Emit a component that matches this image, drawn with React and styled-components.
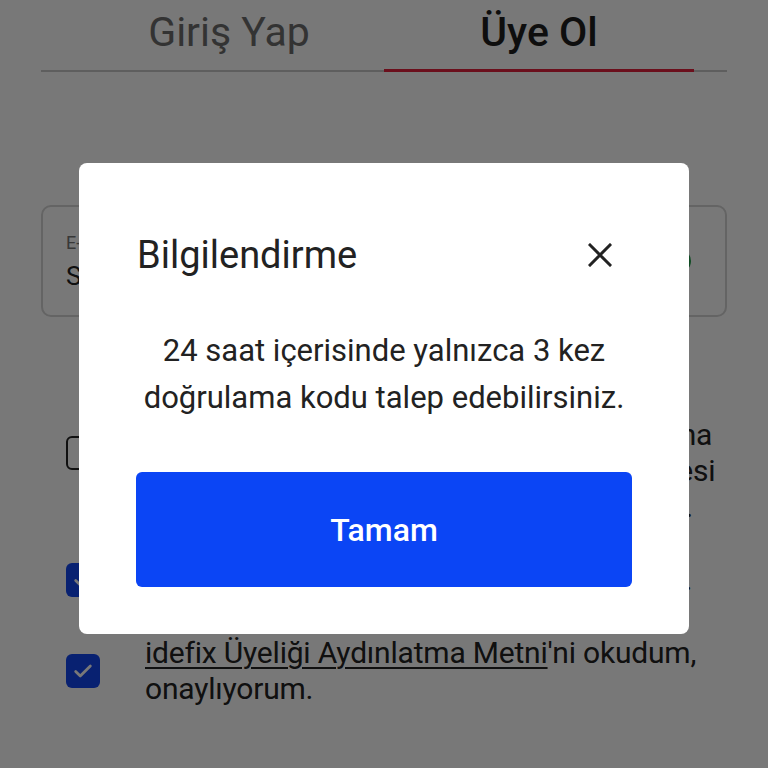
import React from 'react';
import styled, { createGlobalStyle } from 'styled-components';

const GlobalStyle = createGlobalStyle`
  html, body {
    margin: 0;
    padding: 0;
    background: #ffffff;
  }
  body {
    font-family: Roboto, 'Liberation Sans', sans-serif;
    color: #222222;
  }
`;

const agreements = [
  {
    id: 'consent',
    checked: false,
    lines: [
      'Kampanya ve fırsatlardan haberdar',
      'olmak üzere Açık Rıza Metni uyarınca, bana',
      'ileti gönderilmesine ve verilerimin işlenmesi',
      'yönünde açık rıza verdiğimi beyan ederim.',
    ],
  },
  {
    id: 'contract',
    checked: true,
    lines: ['Üyelik Sözleşmesi\u2019ni okudum, kabul ettim.'],
  },
];

const CheckIcon = () => (
  <svg width="22" height="22" viewBox="0 0 24 24" fill="none">
    <path d="M4 12.5l5 5L20 6.5" stroke="#ffffff" strokeWidth="3" strokeLinecap="round" strokeLinejoin="round" />
  </svg>
);

const CloseIcon = () => (
  <svg width="24" height="24" viewBox="0 0 24 24" fill="none">
    <path d="M2 2l20 20M22 2L2 22" stroke="#222222" strokeWidth="3" strokeLinecap="square" />
  </svg>
);

const Checkbox = ({ checked }) => (
  <Box checked={checked}>{checked && <CheckIcon />}</Box>
);

const App = () => (
  <>
    <GlobalStyle />
    <Page>
      <TabBar>
        <Tab>Giriş Yap</Tab>
        <Tab active>Üye Ol</Tab>
      </TabBar>

      <Field>
        <FieldText>
          <FieldLabel>E-posta</FieldLabel>
          <FieldValue>Sedayilmaz@gmail.com</FieldValue>
        </FieldText>
        <ValidBadge>
          <svg width="14" height="14" viewBox="0 0 24 24" fill="none">
            <path d="M4 12.5l5 5L20 6.5" stroke="#ffffff" strokeWidth="3.5" strokeLinecap="round" strokeLinejoin="round" />
          </svg>
        </ValidBadge>
      </Field>

      <Agreements>
        {agreements.map((item) => (
          <AgreementRow key={item.id}>
            <Checkbox checked={item.checked} />
            <AgreementText>
              {item.lines.map((line, i) => (
                <Line key={i}>{line}</Line>
              ))}
            </AgreementText>
          </AgreementRow>
        ))}
        <AgreementRow>
          <Checkbox checked />
          <AgreementText>
            <DocLink>idefix Üyeliği Aydınlatma Metni</DocLink>'ni okudum,
            <br />
            onaylıyorum.
          </AgreementText>
        </AgreementRow>
      </Agreements>
    </Page>

    <Overlay>
      <Dialog>
        <DialogHeader>
          <DialogTitle>Bilgilendirme</DialogTitle>
          <CloseButton aria-label="Kapat">
            <CloseIcon />
          </CloseButton>
        </DialogHeader>
        <DialogBody>
          24 saat içerisinde yalnızca 3 kez
          <br />
          doğrulama kodu talep edebilirsiniz.
        </DialogBody>
        <PrimaryButton>Tamam</PrimaryButton>
      </Dialog>
    </Overlay>
  </>
);

const Page = styled.div`
  width: 768px;
  height: 768px;
  box-sizing: border-box;
  padding: 0 41px;
  overflow: hidden;
`;

const TabBar = styled.div`
  display: flex;
  padding: 0 33px;
  border-bottom: 2px solid #c8c8c8;
`;

const Tab = styled.div`
  flex: 1;
  text-align: center;
  font-size: 41px;
  line-height: 48px;
  padding: 8px 0 13px;
  margin-bottom: -2px;
  font-weight: ${({ active }) => (active ? 500 : 400)};
  color: ${({ active }) => (active ? '#1e1e1e' : '#6e6e6e')};
  border-bottom: 3px solid ${({ active }) => (active ? '#e3203c' : 'transparent')};
`;

const Field = styled.div`
  margin-top: 133px;
  height: 112px;
  box-sizing: border-box;
  border: 2px solid #d4d4d4;
  border-radius: 10px;
  padding: 0 34px 0 23px;
  display: flex;
  align-items: center;
  justify-content: space-between;
`;

const FieldText = styled.div`
  display: flex;
  flex-direction: column;
  gap: 8px;
`;

const FieldLabel = styled.span`
  font-size: 18px;
  color: #777777;
`;

const FieldValue = styled.span`
  font-size: 26px;
  color: #222222;
`;

const ValidBadge = styled.span`
  width: 24px;
  height: 24px;
  border-radius: 50%;
  background: #21a04a;
  display: flex;
  align-items: center;
  justify-content: center;
`;

const Agreements = styled.div`
  margin-top: 64px;
  display: flex;
  flex-direction: column;
  gap: 37px;
  padding-left: 25px;
`;

const AgreementRow = styled.div`
  display: flex;
  align-items: center;
  gap: 45px;
`;

const Box = styled.span`
  flex: none;
  width: 34px;
  height: 34px;
  box-sizing: border-box;
  border-radius: 6px;
  display: flex;
  align-items: center;
  justify-content: center;
  background: ${({ checked }) => (checked ? '#1246f0' : '#ffffff')};
  border: ${({ checked }) => (checked ? 'none' : '2.5px solid #222222')};
`;

const AgreementText = styled.div`
  font-size: 30px;
  line-height: 36px;
  letter-spacing: -0.2px;
  color: #222222;
`;

const Line = styled.div`
  white-space: nowrap;
`;

const DocLink = styled.span`
  text-decoration: underline;
  text-underline-offset: 4px;
  text-decoration-thickness: 1.5px;
`;

const Overlay = styled.div`
  position: fixed;
  inset: 0;
  background: rgba(0, 0, 0, 0.53);
  display: flex;
  align-items: flex-start;
  justify-content: center;
  padding-top: 163px;
`;

const Dialog = styled.div`
  width: 610px;
  box-sizing: border-box;
  background: #ffffff;
  border-radius: 8px;
  padding: 70px 57px 47px 57px;
  display: flex;
  flex-direction: column;
`;

const DialogHeader = styled.div`
  display: flex;
  align-items: center;
  justify-content: space-between;
  padding-left: 1px;
  padding-right: 20px;
`;

const DialogTitle = styled.h2`
  margin: 0;
  font-size: 38px;
  line-height: 44px;
  font-weight: 400;
  color: #222222;
`;

const CloseButton = styled.button`
  border: none;
  background: none;
  padding: 0;
  display: flex;
  cursor: pointer;
`;

const DialogBody = styled.p`
  margin: 50px 0 0;
  text-align: center;
  font-size: 31px;
  line-height: 47px;
  color: #222222;
`;

const PrimaryButton = styled.button`
  margin-top: 51px;
  height: 115px;
  border: none;
  border-radius: 6px;
  background: #0b45f5;
  color: #ffffff;
  font-family: Roboto, 'Liberation Sans', sans-serif;
  font-size: 32px;
  font-weight: 500;
  cursor: pointer;
`;

export default App;
